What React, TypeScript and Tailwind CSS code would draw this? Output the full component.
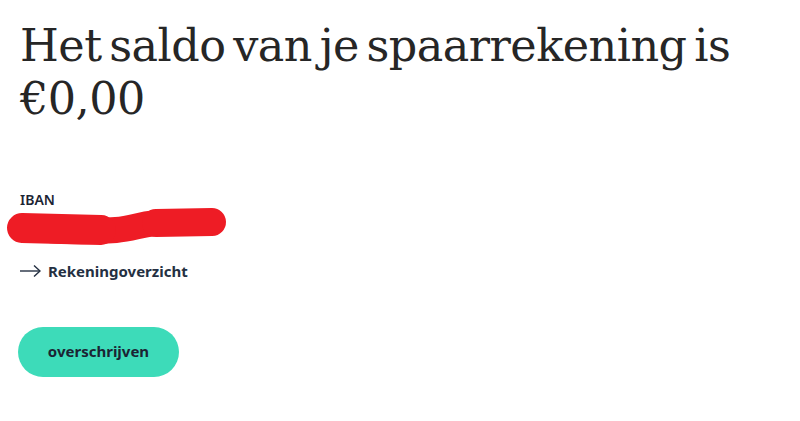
import React from 'react';

const Redaction = () => (
  <svg width="222" height="40" viewBox="0 0 222 40" className="block -ml-[14px] -mt-[2px]">
    <g stroke="#ee1c25" strokeLinecap="round" fill="none">
      <path d="M16 21 C 50 26, 85 26, 110 24 C 130 22, 140 16, 165 16 L 206 16" strokeWidth="26" />
      <path d="M16 22 L 95 24" strokeWidth="30" />
      <path d="M150 17 L 206 16" strokeWidth="28" />
    </g>
  </svg>
);

export default function App() {
  return (
    <div className="w-[800px] h-[421px] bg-white px-5 pt-[19px]">
      <h1
        className="text-[#262626] text-[44.5px] leading-[53px] tracking-[-0.5px] [word-spacing:-6px]"
        style={{ fontFamily: '"DejaVu Serif", serif' }}
      >
        Het saldo van je spaarrekening is
        <br />
        €0,00
      </h1>

      <div className="mt-[70px]" style={{ fontFamily: '"Noto Sans", Lato, sans-serif' }}>
        <div className="text-[14px] font-semibold text-[#1b2433] leading-4 -mt-[3px]">IBAN</div>
        <Redaction />

        <a className="mt-[14px] flex items-center gap-[7px] text-[15px] font-bold text-[#243042]">
          <svg width="21" height="12" viewBox="0 0 21 12" fill="none" stroke="#243042" strokeWidth="1.4">
            <path d="M0 6 H20" />
            <path d="M14 0.5 L20 6 L14 11.5" />
          </svg>
          Rekeningoverzicht
        </a>

        <button className="mt-[44px] h-[50px] w-[161px] -ml-[2px] rounded-full bg-[#3ddbb9] text-[15px] font-bold text-[#1b2433]">
          overschrijven
        </button>
      </div>
    </div>
  );
}
